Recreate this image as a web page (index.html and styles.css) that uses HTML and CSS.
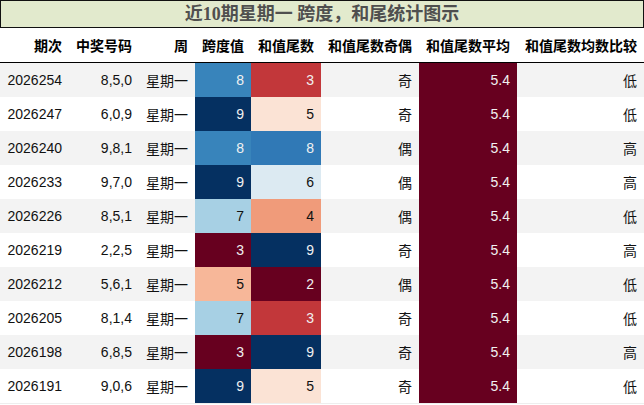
FILE: index.html
```html
<!DOCTYPE html>
<html lang="zh">
<head>
<meta charset="utf-8">
<title>近10期星期一 跨度，和尾统计图示</title>
<link rel="stylesheet" href="styles.css">
</head>
<body>
<div class="title">近10期星期一 跨度，和尾统计图示</div>
<table class="stats">
  <colgroup>
    <col class="c0"><col class="c1"><col class="c2"><col class="c3"><col class="c4"><col class="c5"><col class="c6"><col class="c7">
  </colgroup>
  <thead>
    <tr><th>期次</th><th>中奖号码</th><th>周</th><th>跨度值</th><th>和值尾数</th><th>和值尾数奇偶</th><th>和值尾数平均</th><th>和值尾数均数比较</th></tr>
  </thead>
  <tbody>
    <tr><td>2026254</td><td>8,5,0</td><td>星期一</td><td class="k8 lt">8</td><td class="h3 lt">3</td><td>奇</td><td class="avg lt">5.4</td><td>低</td></tr>
    <tr><td>2026247</td><td>6,0,9</td><td>星期一</td><td class="k9 lt">9</td><td class="h5">5</td><td>奇</td><td class="avg lt">5.4</td><td>低</td></tr>
    <tr><td>2026240</td><td>9,8,1</td><td>星期一</td><td class="k8 lt">8</td><td class="h8 lt">8</td><td>偶</td><td class="avg lt">5.4</td><td>高</td></tr>
    <tr><td>2026233</td><td>9,7,0</td><td>星期一</td><td class="k9 lt">9</td><td class="h6">6</td><td>偶</td><td class="avg lt">5.4</td><td>高</td></tr>
    <tr><td>2026226</td><td>8,5,1</td><td>星期一</td><td class="k7">7</td><td class="h4">4</td><td>偶</td><td class="avg lt">5.4</td><td>低</td></tr>
    <tr><td>2026219</td><td>2,2,5</td><td>星期一</td><td class="k3 lt">3</td><td class="h9 lt">9</td><td>奇</td><td class="avg lt">5.4</td><td>高</td></tr>
    <tr><td>2026212</td><td>5,6,1</td><td>星期一</td><td class="k5">5</td><td class="h2 lt">2</td><td>偶</td><td class="avg lt">5.4</td><td>低</td></tr>
    <tr><td>2026205</td><td>8,1,4</td><td>星期一</td><td class="k7">7</td><td class="h3 lt">3</td><td>奇</td><td class="avg lt">5.4</td><td>低</td></tr>
    <tr><td>2026198</td><td>6,8,5</td><td>星期一</td><td class="k3 lt">3</td><td class="h9 lt">9</td><td>奇</td><td class="avg lt">5.4</td><td>高</td></tr>
    <tr><td>2026191</td><td>9,0,6</td><td>星期一</td><td class="k9 lt">9</td><td class="h5">5</td><td>奇</td><td class="avg lt">5.4</td><td>低</td></tr>
  </tbody>
</table>
</body>
</html>
```
FILE: styles.css
```css
html, body {
  margin: 0;
  padding: 0;
  background: #ffffff;
}

body {
  width: 644px;
  font-family: "Liberation Sans", "Noto Sans CJK SC", sans-serif;
  font-size: 14px;
  color: #111111;
}

.title {
  box-sizing: border-box;
  height: 28px;
  border: 1px solid #111111;
  background: #e2eacd;
  color: #4f4f4f;
  font-family: "Liberation Serif", "Noto Sans CJK SC", serif;
  font-size: 18px;
  font-weight: bold;
  line-height: 26px;
  text-align: center;
}

.stats {
  width: 644px;
  border-collapse: collapse;
  table-layout: fixed;
  border-bottom: 1px solid #eeeeee;
}

.c0 { width: 69px; }
.c1 { width: 70px; }
.c2 { width: 56px; }
.c3 { width: 56px; }
.c4 { width: 70px; }
.c5 { width: 98px; }
.c6 { width: 98px; }
.c7 { width: 127px; }

.stats th {
  height: 34px;
  padding: 0 7px 0 0;
  text-align: right;
  font-family: "Noto Sans CJK SC", "Liberation Sans", sans-serif;
  font-size: 14px;
  font-weight: bold;
  color: #000000;
  white-space: nowrap;
  border-bottom: 1px solid #000000;
}

.stats td {
  height: 34px;
  padding: 0 7px 0 0;
  text-align: right;
  white-space: nowrap;
}

.stats tbody tr:nth-child(odd) {
  background: #f3f3f3;
}

.lt { color: #f1f1f1; }

.k3 { background: #67001f; }
.k5 { background: #f7b799; }
.k7 { background: #a7d0e4; }
.k8 { background: #3884bb; }
.k9 { background: #053061; }

.h2 { background: #67001f; }
.h3 { background: #c2373a; }
.h4 { background: #f09b7a; }
.h5 { background: #fbe3d5; }
.h6 { background: #dceaf2; }
.h8 { background: #3079b6; }
.h9 { background: #053061; }

.avg { background: #67001f; }
```
